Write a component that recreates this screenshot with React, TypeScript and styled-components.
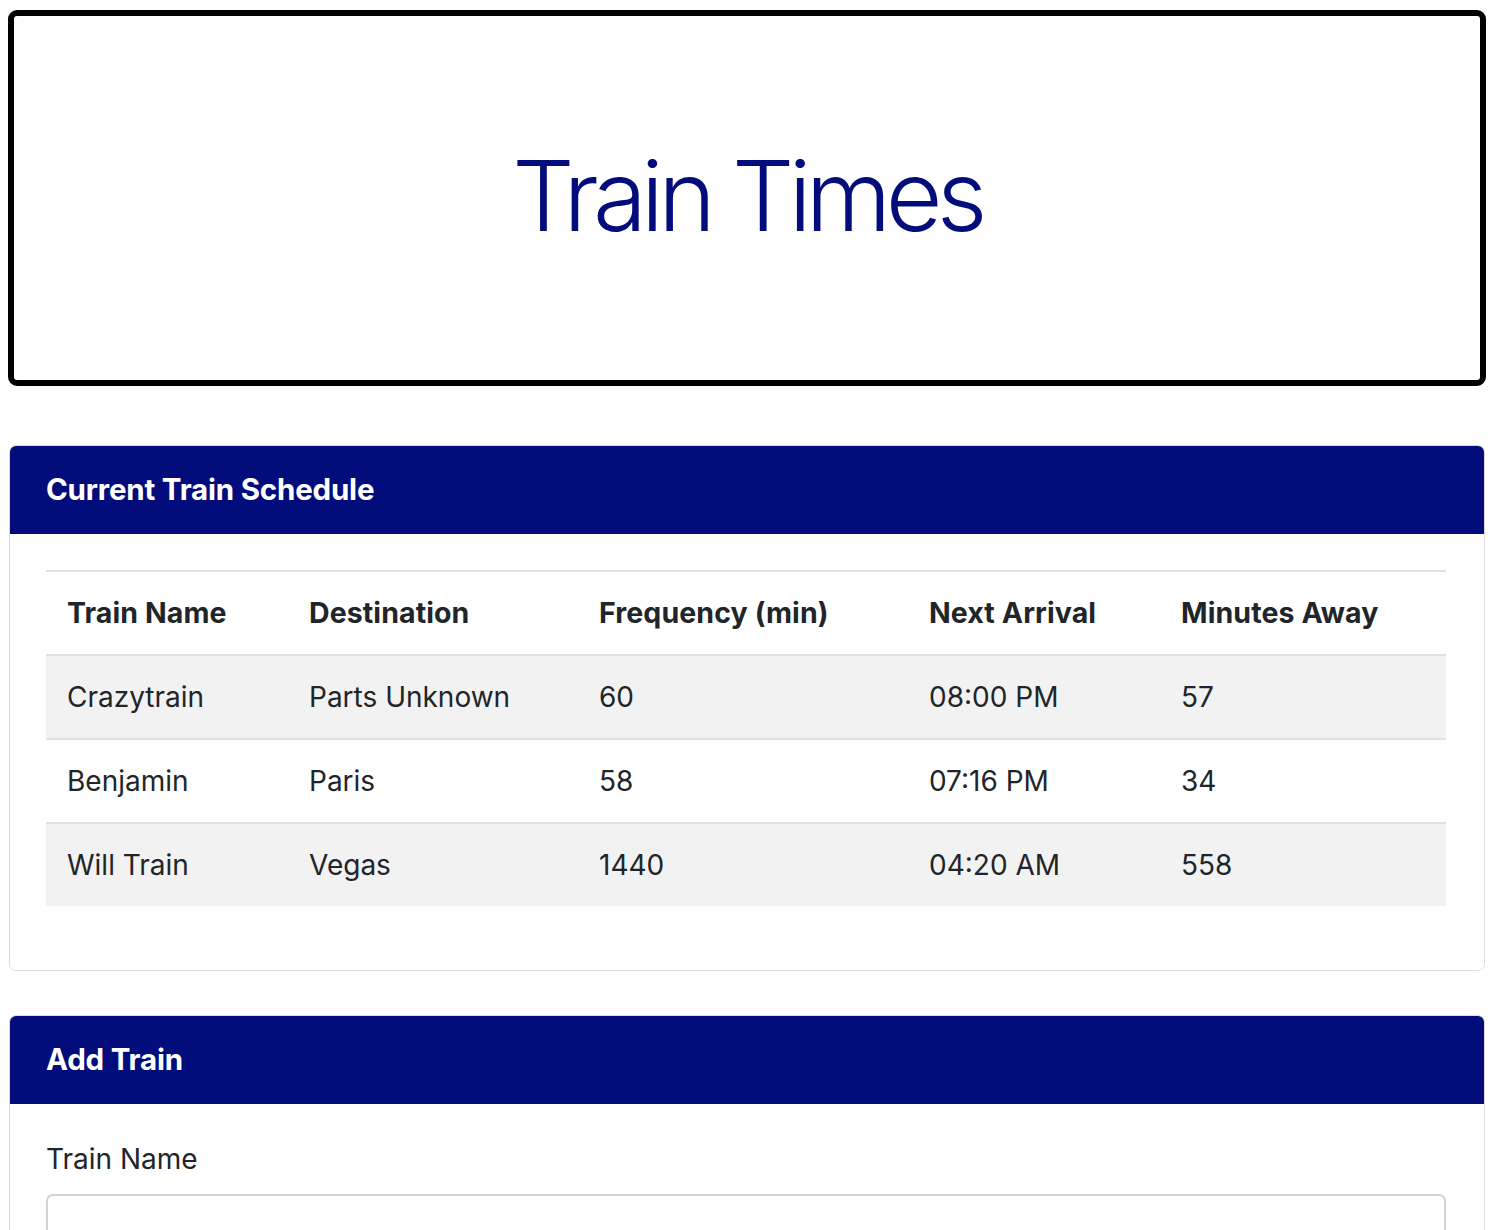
import React from "react";
import styled, { createGlobalStyle } from "styled-components";

const GlobalStyle = createGlobalStyle`
  html, body { margin: 0; padding: 0; background: #ffffff; }
  body {
    font-family: Inter, "Noto Sans", "Liberation Sans", sans-serif;
    color: #212529;
    overflow: hidden;
  }
  * { box-sizing: border-box; }
`;

const NAVY = "#030c7b";

const Page = styled.div`
  width: 1478px;
  margin: 10px 0 0 8px;
  display: flex;
  flex-direction: column;
`;

const Jumbotron = styled.header`
  height: 376px;
  border: 6px solid #000;
  border-radius: 9px;
  display: flex;
  align-items: center;
  justify-content: center;
  margin-bottom: 59px;
`;

const Title = styled.h1`
  margin: 0 0 4px 0;
  font-size: 98px;
  font-weight: 300;
  letter-spacing: -5.7px;
  line-height: 1.2;
  color: ${NAVY};
`;

const Card = styled.section<{ $gap?: number }>`
  margin: 0 1px ${(p) => p.$gap ?? 0}px 1px;
  border: 1px solid #dcdcdc;
  border-radius: 7px;
  overflow: hidden;
  background: #fff;
`;

const CardHeader = styled.div`
  background: ${NAVY};
  color: #fff;
  font-size: 29.5px;
  font-weight: 700;
  letter-spacing: -0.2px;
  line-height: 44px;
  padding: 21px 36px 22px 36px;
  border-bottom: 1px solid ${NAVY};
`;

const CardBody = styled.div<{ $fade?: boolean }>`
  padding: ${(p) => (p.$fade ? "34px" : "36px")} 38px 35px 36px;
  background: ${(p) =>
    p.$fade
      ? "radial-gradient(ellipse 900px 260px at 1250px 360px, #e9e9e9 0%, #f6f6f6 45%, #ffffff 80%)"
      : "#fff"};
`;

const Table = styled.table`
  width: 100%;
  border-collapse: collapse;
  margin-bottom: 29px;
  font-size: 28px;
  line-height: 42px;
  table-layout: fixed;

  tbody tr + tr td {
    border-top: 2px solid #dee2e6;
  }
`;

const HeadCell = styled.th<{ $w: number }>`
  width: ${(p) => p.$w}px;
  text-align: left;
  font-weight: 700;
  font-size: 28.5px;
  letter-spacing: 0.1px;
  padding: 20px 21px;
  border-top: 2px solid #dee2e6;
  border-bottom: 2px solid #dee2e6;
  vertical-align: middle;
`;

const Row = styled.tr<{ $striped: boolean }>`
  background: ${(p) => (p.$striped ? "#f2f2f2" : "#fff")};
`;

const Cell = styled.td`
  padding: 20px 21px;
  font-weight: 400;
  vertical-align: middle;
`;

const Label = styled.label`
  display: block;
  font-size: 28px;
  line-height: 42px;
  margin-bottom: 14px;
`;

const Input = styled.input`
  display: block;
  width: 100%;
  height: 67px;
  border: 2px solid #ced4da;
  border-radius: 7px;
  background: transparent;
  font-size: 28px;
  padding: 10px 21px;
`;

const columns = [
  { title: "Train Name", w: 242 },
  { title: "Destination", w: 290 },
  { title: "Frequency (min)", w: 330 },
  { title: "Next Arrival", w: 252 },
  { title: "Minutes Away", w: 286 },
];

const trains = [
  ["Crazytrain", "Parts Unknown", "60", "08:00 PM", "57"],
  ["Benjamin", "Paris", "58", "07:16 PM", "34"],
  ["Will Train", "Vegas", "1440", "04:20 AM", "558"],
];

export default function App() {
  return (
    <>
      <GlobalStyle />
      <Page>
        <Jumbotron>
          <Title>Train Times</Title>
        </Jumbotron>

        <Card $gap={44}>
          <CardHeader>Current Train Schedule</CardHeader>
          <CardBody>
            <Table>
              <thead>
                <tr>
                  {columns.map((c) => (
                    <HeadCell key={c.title} $w={c.w}>
                      {c.title}
                    </HeadCell>
                  ))}
                </tr>
              </thead>
              <tbody>
                {trains.map((t, i) => (
                  <Row key={t[0]} $striped={i % 2 === 0}>
                    {t.map((v, j) => (
                      <Cell key={j}>{v}</Cell>
                    ))}
                  </Row>
                ))}
              </tbody>
            </Table>
          </CardBody>
        </Card>

        <Card>
          <CardHeader>Add Train</CardHeader>
          <CardBody $fade>
            <Label htmlFor="train-name">Train Name</Label>
            <Input id="train-name" type="text" />
          </CardBody>
        </Card>
      </Page>
    </>
  );
}
